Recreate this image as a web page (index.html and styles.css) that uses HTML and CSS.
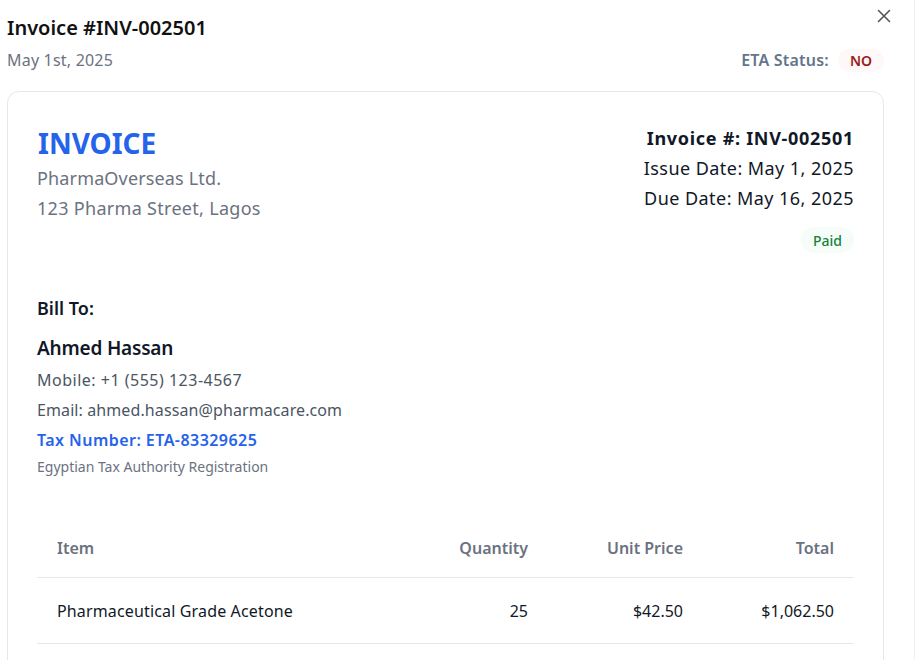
FILE: index.html
```html
<!DOCTYPE html>
<html lang="en">
<head>
<meta charset="utf-8">
<title>Invoice #INV-002501</title>
<link rel="stylesheet" href="styles.css">
</head>
<body>
<div class="modal">
  <button class="close" aria-label="Close">
    <svg width="14" height="14" viewBox="0 0 14 14"><path d="M1.5 1.5 L12.5 12.5 M12.5 1.5 L1.5 12.5" stroke="#555" stroke-width="1.6" stroke-linecap="round" fill="none"/></svg>
  </button>
  <div class="top">
    <div class="top-left">
      <h1 class="title">Invoice #INV-002501</h1>
      <div class="date">May 1st, 2025</div>
    </div>
    <div class="eta">
      <span class="eta-label">ETA Status:</span>
      <span class="badge badge-no">NO</span>
    </div>
  </div>

  <div class="card">
    <div class="card-head">
      <div class="company">
        <div class="brand">INVOICE</div>
        <div class="muted-line">PharmaOverseas Ltd.</div>
        <div class="muted-line addr">123 Pharma Street, Lagos</div>
      </div>
      <div class="meta">
        <div class="meta-num">Invoice #: INV-002501</div>
        <div class="meta-line">Issue Date: May 1, 2025</div>
        <div class="meta-line">Due Date: May 16, 2025</div>
        <span class="badge badge-paid">Paid</span>
      </div>
    </div>

    <div class="bill">
      <div class="bill-title">Bill To:</div>
      <div class="bill-name">Ahmed Hassan</div>
      <div class="bill-line mobile">Mobile: +1 (555) 123-4567</div>
      <div class="bill-line">Email: ahmed.hassan@pharmacare.com</div>
      <div class="bill-tax">Tax Number: ETA-83329625</div>
      <div class="bill-note">Egyptian Tax Authority Registration</div>
    </div>

    <table class="items">
      <thead>
        <tr>
          <th class="c-item">Item</th>
          <th class="c-qty">Quantity</th>
          <th class="c-price">Unit Price</th>
          <th class="c-total">Total</th>
        </tr>
      </thead>
      <tbody>
        <tr>
          <td class="c-item">Pharmaceutical Grade Acetone</td>
          <td class="c-qty">25</td>
          <td class="c-price">$42.50</td>
          <td class="c-total">$1,062.50</td>
        </tr>
      </tbody>
    </table>
  </div>
</div>
</body>
</html>
```

FILE: styles.css
```css
* { box-sizing: border-box; }
html, body {
  margin: 0;
  padding: 0;
  background: #ffffff;
  font-family: "Noto Sans", "Open Sans", Arial, sans-serif;
  color: #111827;
}
.modal {
  position: relative;
  width: 915px;
  height: 660px;
  padding: 14px 30px 0 7px;
  border-right: 1px solid #f0f0f0;
  overflow: hidden;
}
.close {
  position: absolute;
  top: 9px;
  right: 23px;
  width: 14px;
  height: 14px;
  padding: 0;
  border: 0;
  background: none;
  display: flex;
}
.top {
  display: flex;
  justify-content: space-between;
  align-items: flex-end;
}
.title {
  margin: 0;
  font-size: 20px;
  line-height: 28px;
  font-weight: 600;
  color: #111111;
}
.date {
  margin-top: 6px;
  font-size: 16px;
  line-height: 24px;
  color: #6b7280;
  letter-spacing: 0.2px;
}
.eta {
  display: flex;
  align-items: center;
  gap: 9px;
  height: 24px;
}
.eta-label {
  font-size: 16px;
  font-weight: 600;
  color: #64748b;
  letter-spacing: 0.2px;
}
.badge {
  display: inline-flex;
  align-items: center;
  justify-content: center;
  border-radius: 999px;
  font-size: 14px;
  font-weight: 600;
}
.badge-no {
  height: 23px;
  padding: 0 12px;
  background: #fef9f8;
  color: #991b1b;
}
.card {
  margin-top: 19px;
  border: 1px solid #e5e7eb;
  border-radius: 12px;
  padding: 31px 29px 0 29px;
  height: 600px;
}
.card-head {
  display: flex;
  justify-content: space-between;
  align-items: flex-start;
}
.brand {
  font-size: 28px;
  line-height: 40px;
  font-weight: 700;
  color: #2563eb;
  padding-left: 1px;
}
.muted-line {
  font-size: 18px;
  line-height: 30px;
  color: #6b7280;
  letter-spacing: 0.15px;
}
.addr { letter-spacing: 0.3px; }
.meta {
  display: flex;
  flex-direction: column;
  align-items: flex-end;
}
.meta-num {
  font-size: 18px;
  line-height: 30px;
  font-weight: 700;
  letter-spacing: 0.7px;
}
.meta-line {
  font-size: 18px;
  line-height: 30px;
  letter-spacing: 0.45px;
}
.badge-paid {
  margin-top: 14px;
  height: 26px;
  padding: 0 12px;
  background: #f6fdf8;
  color: #15803d;
  font-weight: 500;
}
.bill {
  margin-top: 41px;
}
.bill-title {
  font-size: 18px;
  line-height: 28px;
  font-weight: 600;
}
.bill-name {
  margin-top: 12px;
  font-size: 19px;
  line-height: 28px;
  font-weight: 600;
  letter-spacing: -0.2px;
}
.bill-line {
  font-size: 16px;
  line-height: 30px;
  color: #4b5563;
  letter-spacing: 0.1px;
}
.mobile {
  margin-top: 3px;
  letter-spacing: 0.5px;
}
.bill-tax {
  font-size: 16px;
  line-height: 30px;
  font-weight: 600;
  color: #2563eb;
  letter-spacing: 0.45px;
}
.bill-note {
  font-size: 14px;
  line-height: 24px;
  color: #6b7280;
}
.items {
  margin-top: 41px;
  width: 100%;
  border-collapse: collapse;
  font-size: 16px;
}
.items th {
  padding: 16px 20px 17px;
  line-height: 24px;
  font-weight: 600;
  color: #6b7280;
  border-bottom: 1px solid #e5e7eb;
}
.items td {
  padding: 21px 20px 20px;
  line-height: 24px;
  border-bottom: 1px solid #e5e7eb;
}
.items td.c-item { letter-spacing: 0.15px; }
.c-item { text-align: left; }
.c-qty { text-align: right; width: 150px; }
.c-price { text-align: right; width: 155px; }
.c-total { text-align: right; width: 151px; }
```
